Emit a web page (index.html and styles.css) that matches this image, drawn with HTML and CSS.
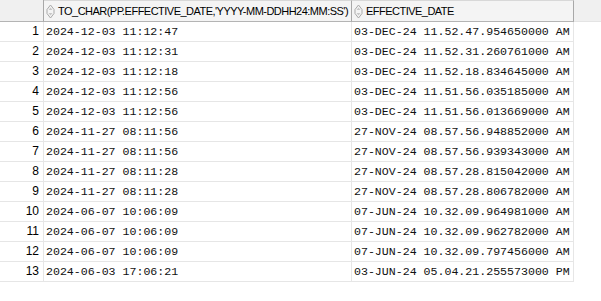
FILE: index.html
```html
<!DOCTYPE html>
<html lang="en">

<head>
    <meta charset="UTF-8">
    <title>Query Result</title>
    <link rel="stylesheet" href="styles.css">
</head>

<body>
    <div class="grid">
        <div class="head">
            <div class="cell num"></div>
            <div class="cell col-a">
                <svg class="sort" width="9" height="15" viewBox="0 0 9 15">
                    <path d="M4.5 1 L8 5.5 L8 9.5 L4.5 14 L1 9.5 L1 5.5 Z" fill="#f4f4f4" stroke="#a8a8a8" />
                    <path d="M4.5 3.5 L6.5 6 L2.5 6 Z M4.5 11.5 L6.5 9 L2.5 9 Z" fill="#c8c8c8" />
                </svg>
                <span>TO_CHAR(PP.EFFECTIVE_DATE,'YYYY-MM-DDHH24:MM:SS')</span>
            </div>
            <div class="cell col-b">
                <svg class="sort" width="9" height="15" viewBox="0 0 9 15">
                    <path d="M4.5 1 L8 5.5 L8 9.5 L4.5 14 L1 9.5 L1 5.5 Z" fill="#f4f4f4" stroke="#a8a8a8" />
                    <path d="M4.5 3.5 L6.5 6 L2.5 6 Z M4.5 11.5 L6.5 9 L2.5 9 Z" fill="#c8c8c8" />
                </svg>
                <span>EFFECTIVE_DATE</span>
            </div>
            <div class="cell rest"></div>
        </div>
        <div id="rows"></div>
    </div>

    <script src="app.js"></script>
</body>

</html>
```

FILE: styles.css
```css
* {
    margin: 0px;
    padding: 0px;
    box-sizing: border-box;
}

body {
    background: #fff;
    font-family: "Liberation Sans", Tahoma, sans-serif;
    font-size: 12px;
    color: #000;
}

.grid {
    width: 601px;
}

.head,
.row {
    display: flex;
}

.head {
    height: 22px;
    background: #f0f0f0;
}

.head .cell {
    height: 22px;
    border-bottom: 1px solid #b4b4b4;
}

.head .col-a,
.head .col-b {
    display: flex;
    align-items: center;
    gap: 3px;
    padding-left: 2px;
    border-top: 1px solid #d8d8d8;
    border-right: 1px solid #a8a8a8;
    background: #f4f4f4;
    color: #000;
    font-size: 11px;
    letter-spacing: -0.52px;
    white-space: nowrap;
    overflow: hidden;
}

.head .num {
    border-right: 1px solid #a8a8a8;
}

.head .rest {
    flex: 1;
    border-bottom: 1px solid #e4e4e4;
}

.num {
    width: 44px;
    flex: none;
}

.col-a {
    width: 308px;
    flex: none;
}

.col-b {
    width: 222px;
    flex: none;
}

.sort {
    flex: none;
}

.row {
    height: 20px;
}

.row .cell {
    height: 20px;
    line-height: 19px;
    border-bottom: 1px solid #e6e6e6;
    white-space: nowrap;
    overflow: hidden;
}

.row .num {
    text-align: right;
    padding-right: 4px;
    border-right: 1px solid #e6e6e6;
}

.row .col-a,
.row .col-b {
    font-family: "Liberation Mono", "Courier New", monospace;
    font-size: 11.6px;
    padding-left: 2px;
    border-right: 1px solid #e6e6e6;
    color: #111;
}
```

FILE: app.js
```js
const data = [
    ["2024-12-03 11:12:47", "03-DEC-24 11.52.47.954650000 AM"],
    ["2024-12-03 11:12:31", "03-DEC-24 11.52.31.260761000 AM"],
    ["2024-12-03 11:12:18", "03-DEC-24 11.52.18.834645000 AM"],
    ["2024-12-03 11:12:56", "03-DEC-24 11.51.56.035185000 AM"],
    ["2024-12-03 11:12:56", "03-DEC-24 11.51.56.013669000 AM"],
    ["2024-11-27 08:11:56", "27-NOV-24 08.57.56.948852000 AM"],
    ["2024-11-27 08:11:56", "27-NOV-24 08.57.56.939343000 AM"],
    ["2024-11-27 08:11:28", "27-NOV-24 08.57.28.815042000 AM"],
    ["2024-11-27 08:11:28", "27-NOV-24 08.57.28.806782000 AM"],
    ["2024-06-07 10:06:09", "07-JUN-24 10.32.09.964981000 AM"],
    ["2024-06-07 10:06:09", "07-JUN-24 10.32.09.962782000 AM"],
    ["2024-06-07 10:06:09", "07-JUN-24 10.32.09.797456000 AM"],
    ["2024-06-03 17:06:21", "03-JUN-24 05.04.21.255573000 PM"]
];

let html = "";
for (let i = 0; i < data.length; i++) {
    html += `
        <div class="row">
            <div class="cell num">${i + 1}</div>
            <div class="cell col-a">${data[i][0]}</div>
            <div class="cell col-b">${data[i][1]}</div>
        </div>
    `;
}
document.querySelector("#rows").innerHTML = html;
```
